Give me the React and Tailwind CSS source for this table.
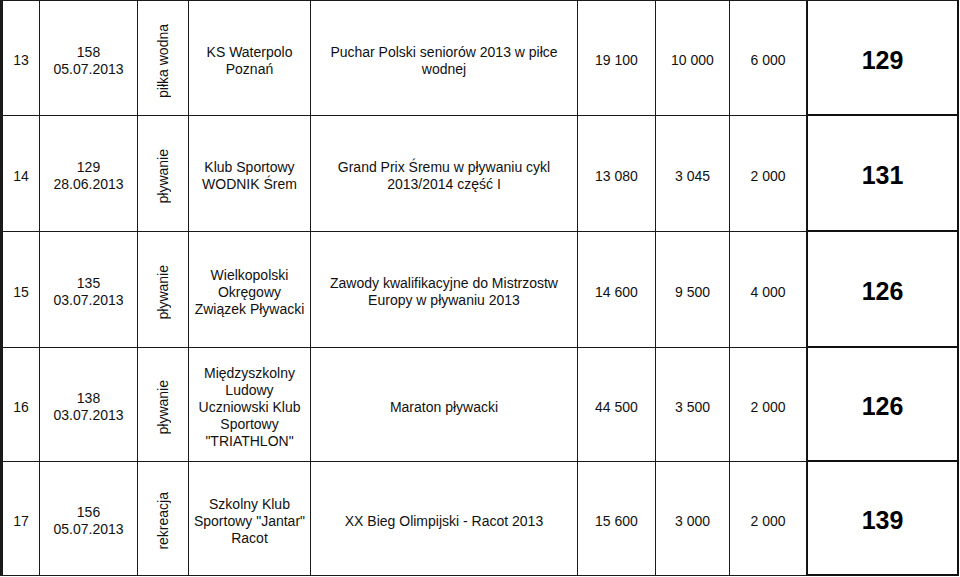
import React from 'react';

const rows = [
    {
        lp: '13',
        num: '158',
        date: '05.07.2013',
        sport: 'piłka wodna',
        club: ['KS Waterpolo', 'Poznań'],
        event: ['Puchar Polski seniorów 2013 w piłce', 'wodnej'],
        a: '19 100',
        b: '10 000',
        c: '6 000',
        score: '129',
        h: 'h-[115px]',
    },
    {
        lp: '14',
        num: '129',
        date: '28.06.2013',
        sport: 'pływanie',
        club: ['Klub Sportowy', 'WODNIK Śrem'],
        event: ['Grand Prix Śremu w pływaniu cykl', '2013/2014 część I'],
        a: '13 080',
        b: '3 045',
        c: '2 000',
        score: '131',
        h: 'h-[116px]',
    },
    {
        lp: '15',
        num: '135',
        date: '03.07.2013',
        sport: 'pływanie',
        club: ['Wielkopolski', 'Okręgowy', 'Związek Pływacki'],
        event: ['Zawody kwalifikacyjne do Mistrzostw', 'Europy w pływaniu 2013'],
        a: '14 600',
        b: '9 500',
        c: '4 000',
        score: '126',
        h: 'h-[116px]',
    },
    {
        lp: '16',
        num: '138',
        date: '03.07.2013',
        sport: 'pływanie',
        club: ['Międzyszkolny', 'Ludowy', 'Uczniowski Klub', 'Sportowy', '"TRIATHLON"'],
        event: ['Maraton pływacki'],
        a: '44 500',
        b: '3 500',
        c: '2 000',
        score: '126',
        h: 'h-[114px]',
    },
    {
        lp: '17',
        num: '156',
        date: '05.07.2013',
        sport: 'rekreacja',
        club: ['Szkolny Klub', 'Sportowy "Jantar"', 'Racot'],
        event: ['XX Bieg Olimpijski - Racot 2013'],
        a: '15 600',
        b: '3 000',
        c: '2 000',
        score: '139',
        h: 'h-[114px]',
    },
];

const cell = 'flex shrink-0 items-center justify-center border-r border-b border-[#1a1a1a] pt-[5px] text-center';

function Lines({ items }) {
    return (
        <div className="flex flex-col items-center">
            {items.map((line, i) => (
                <span key={i} className="whitespace-nowrap">
                    {line}
                </span>
            ))}
        </div>
    );
}

const App = () => {
    return (
        <div
            className="min-h-[577px] w-[960px] bg-white text-[14px] leading-[17px] text-[#111]"
            style={{ fontFamily: '"Liberation Sans", Arial, sans-serif' }}
        >
            <div className="flex w-[959px] flex-col border-t border-l-[3px] border-[#1a1a1a]">
                {rows.map((row) => (
                    <div key={row.lp} className={`flex ${row.h}`}>
                        <div className={`${cell} w-[37px]`}>{row.lp}</div>
                        <div className={`${cell} w-[98px]`}>
                            <Lines items={[row.num, row.date]} />
                        </div>
                        <div className={`${cell} w-[51px]`}>
                            <span className="rotate-180 whitespace-nowrap [writing-mode:vertical-rl]">{row.sport}</span>
                        </div>
                        <div className={`${cell} w-[122px]`}>
                            <Lines items={row.club} />
                        </div>
                        <div className={`${cell} w-[267px]`}>
                            <Lines items={row.event} />
                        </div>
                        <div className={`${cell} w-[78px]`}>{row.a}</div>
                        <div className={`${cell} w-[74px]`}>{row.b}</div>
                        <div className={`${cell} w-[77px]`}>{row.c}</div>
                        <div className="flex w-[152px] shrink-0 items-center justify-center border-r-2 border-b-2 border-l border-[#111] pt-[5px] text-[25px] font-bold leading-none text-black">
                            {row.score}
                        </div>
                    </div>
                ))}
            </div>
        </div>
    );
};

export default App;
